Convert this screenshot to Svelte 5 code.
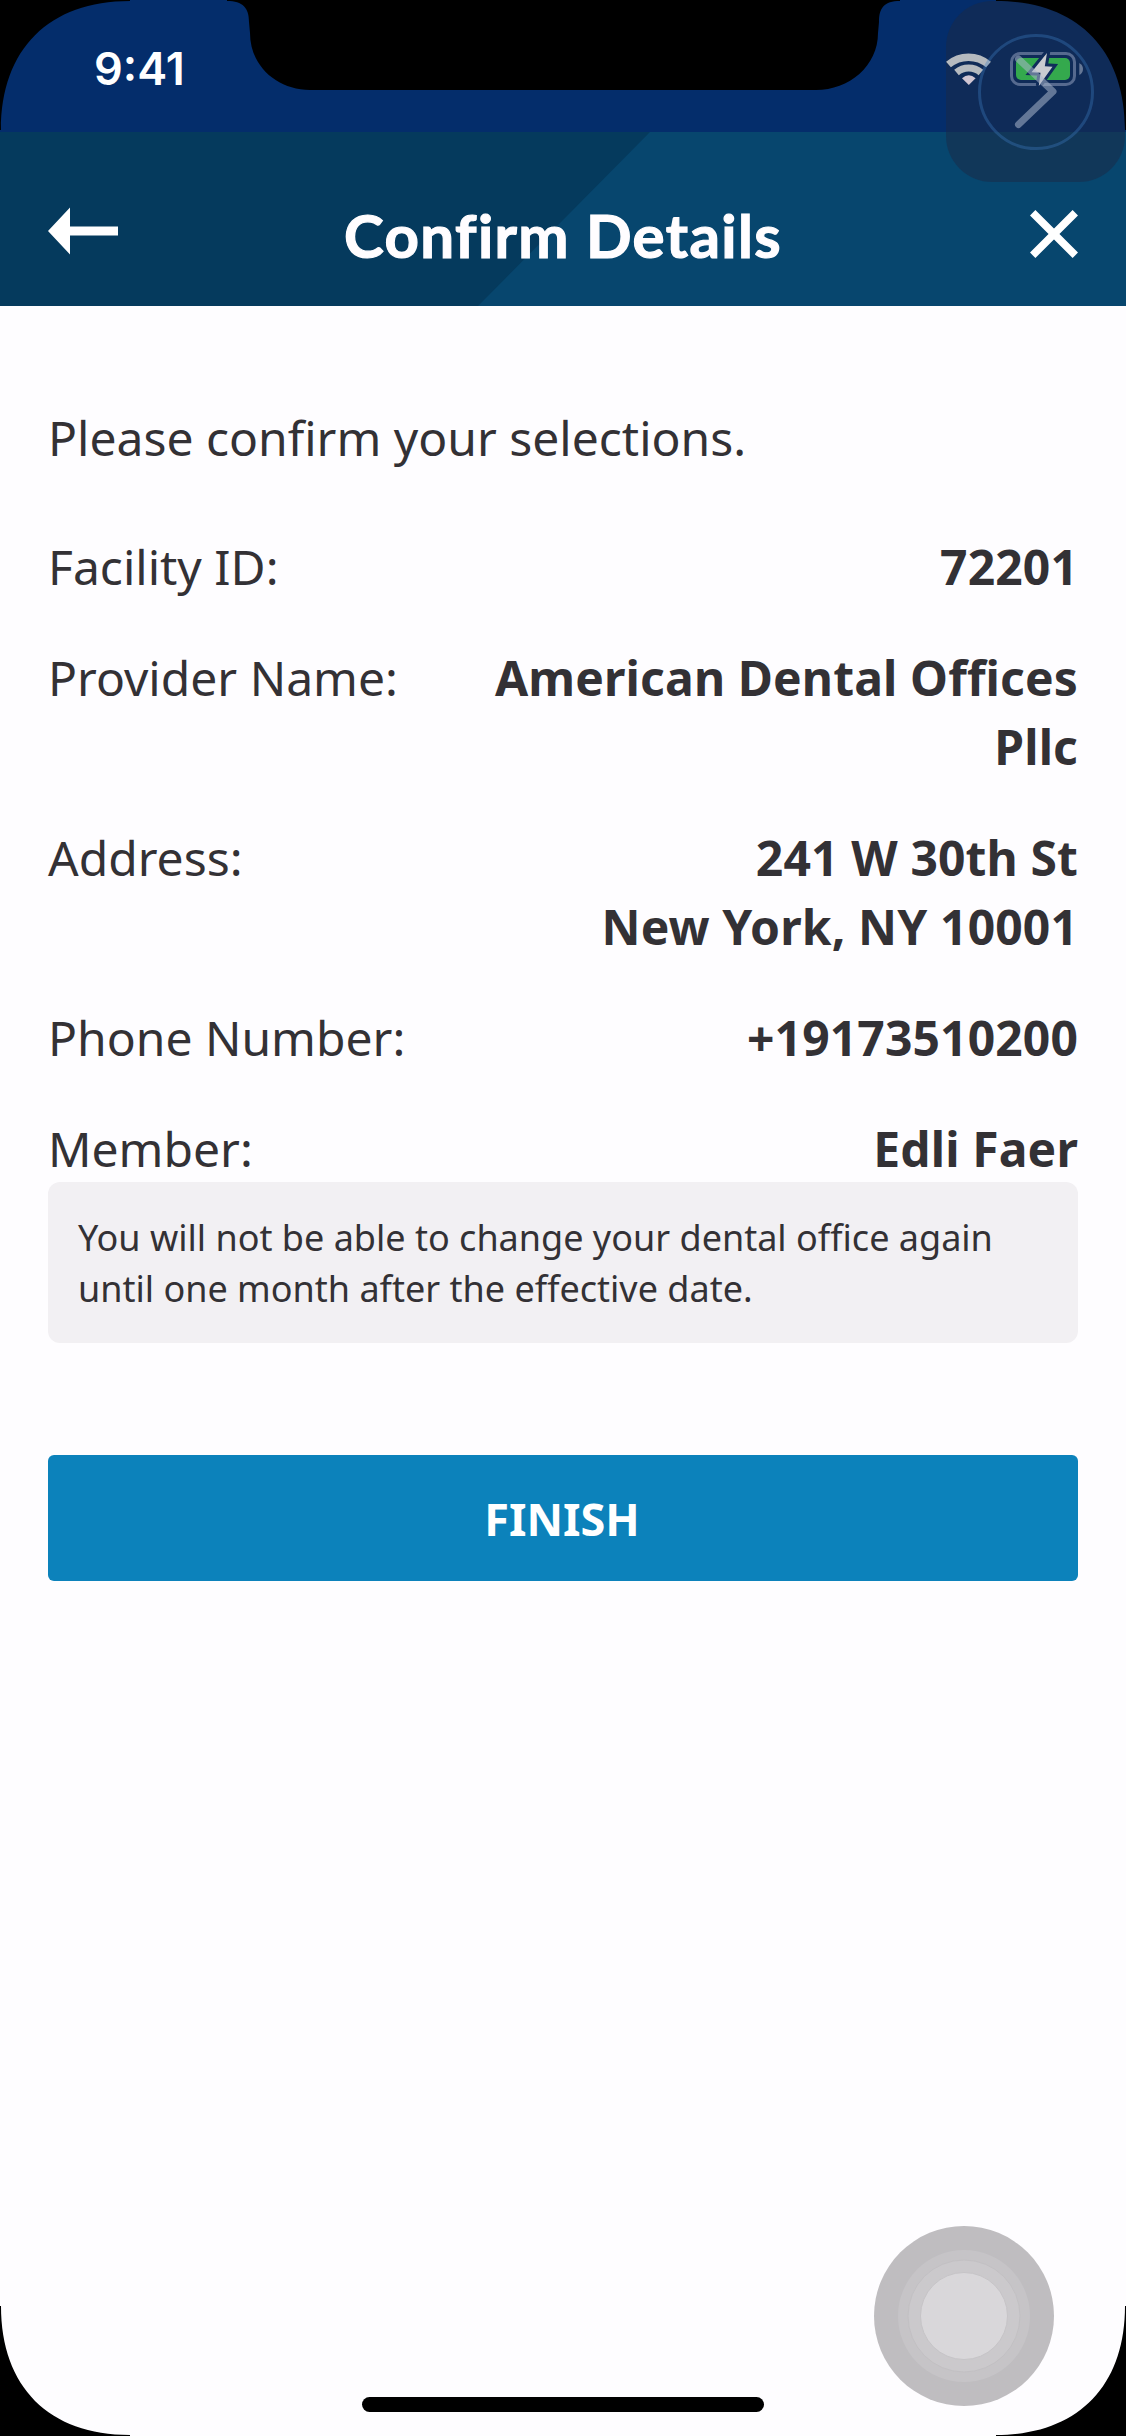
<script>
  const rows = [
    { label: 'Facility ID:', lines: ['72201'] },
    { label: 'Provider Name:', lines: ['American Dental Offices', 'Pllc'] },
    { label: 'Address:', lines: ['241 W 30th St', 'New York, NY 10001'] },
    { label: 'Phone Number:', lines: ['+19173510200'] },
    { label: 'Member:', lines: ['Edli Faer'] }
  ];
</script>

<div class="screen">
  <div class="status">
    <span class="time">9:41</span>
    <svg class="indicators" width="138" height="36" viewBox="946 51 138 36">
      <g fill="none" stroke="#b5babf">
        <path d="M948.5 64.5 A31 31 0 0 1 988.5 64.5" stroke-width="7.5" />
        <path d="M956.5 72.5 A18.5 18.5 0 0 1 980.9 72.5" stroke-width="7" />
      </g>
      <path d="M968.8 85 L962 78.2 Q968.8 72.3 975.6 78.2 Z" fill="#d0c6d2" />
      <rect x="1011.5" y="53.5" width="63" height="31" rx="8.5" fill="none" stroke="#566a8f" stroke-width="3" />
      <path d="M1079.3 63 Q1083 65 1083 69 T1079.3 75 Z" fill="#667896" />
      <rect x="1016" y="58" width="54" height="22" rx="5" fill="#34a94d" />
      <path d="M1047 53 L1031.5 72.3 L1040.5 72.7 L1038.8 86 L1052.5 66.7 L1044.8 66.3 Z" fill="#c9cbd0" stroke="#102c5a" stroke-width="6" paint-order="stroke" />
    </svg>
  </div>

  <header>
    <button class="icon" aria-label="Back">
      <svg width="70" height="48" viewBox="48 210 70 48">
        <path d="M48 231 L70 207.5 V226.5 H118 V235.5 H70 V254.5 Z" fill="#fff" />
      </svg>
    </button>
    <h1>Confirm Details</h1>
    <button class="icon" aria-label="Close">
      <svg width="48" height="48" viewBox="0 0 48 48">
        <path d="M2.7 2.7 L45.3 45.3 M45.3 2.7 L2.7 45.3" stroke="#fff" stroke-width="7.6" />
      </svg>
    </button>
  </header>

  <main>
    <p class="intro">Please confirm your selections.</p>
    <dl>
      {#each rows as row}
        <div class="row">
          <dt>{row.label}</dt>
          <dd>
            {#each row.lines as line}<span>{line}</span>{/each}
          </dd>
        </div>
      {/each}
    </dl>
    <p class="note">You will not be able to change your dental office again until one month after the effective date.</p>
    <button class="finish">FINISH</button>
  </main>

  <div class="home"></div>

  <div class="shade"></div>

  <!-- floating controls and the device outline lie over the page -->
  <svg class="overlay" width="1126" height="2436" viewBox="0 0 1126 2436">
    <circle cx="1036" cy="92" r="56.5" fill="none" stroke="#3f7fc4" stroke-opacity=".35" stroke-width="3" />
    <path d="M1018.5 59 L1053 91.5 L1018.5 124.5" fill="none" stroke="#a9b6cc" stroke-opacity=".55" stroke-width="7" stroke-linecap="round" stroke-linejoin="round" />
    <circle cx="964" cy="2316" r="90" fill="#bfbdc0" />
    <circle cx="964" cy="2316" r="66" fill="#c6c4c7" />
    <circle cx="964" cy="2316" r="56" fill="#cbc9cc" stroke="#c2c0c3" />
    <circle cx="964" cy="2316" r="43.5" fill="#d9d7da" stroke="#c6c4c7" />
    <g fill="#000">
      <path d="M0 0 H130 V1 C49 1 1 49 1 130 H0 Z" />
      <path d="M1126 0 H996 V1 C1077 1 1125 49 1125 130 H1126 Z" />
      <path d="M0 2436 H130 V2435 C49 2435 1 2387 1 2306 H0 Z" />
      <path d="M1126 2436 H996 V2435 C1077 2435 1125 2387 1125 2306 H1126 Z" />
      <path d="M227 0 H900 V1 C884 1 879 8 879 22 L878 33 C878 66 849 90 816 90 H310 C277 90 250 66 250 33 L249 22 C249 8 243 1 227 1 Z" />
    </g>
  </svg>
</div>

<style>
  :global(body) {
    margin: 0;
    background: #fefdff;
  }
  .screen {
    position: relative;
    display: flex;
    flex-direction: column;
    width: 1126px;
    height: 2436px;
    overflow: hidden;
    background: #fefdff;
    color: #333135;
    font-family: 'Noto Sans', sans-serif;
  }
  .status {
    display: flex;
    justify-content: space-between;
    align-items: center;
    box-sizing: border-box;
    height: 132px;
    padding: 6px 42px 0 94px;
    background: #042d6b;
  }
  .status .indicators {
    display: block;
    position: relative;
    z-index: 1;
  }
  .time {
    font: 600 45px/60px Inter, sans-serif;
    color: #fff;
  }
  header {
    display: flex;
    justify-content: space-between;
    align-items: center;
    box-sizing: border-box;
    height: 174px;
    padding: 30px 48px 0;
    background: #07466e;
    position: relative;
    isolation: isolate;
  }
  header::before {
    content: '';
    position: absolute;
    inset: 0;
    z-index: -1;
    background: #053a5d;
    clip-path: polygon(0 0, 650px 0, 478px 100%, 0 100%);
  }
  .icon {
    display: flex;
    width: 70px;
    padding: 0;
    border: 0;
    background: none;
  }
  .icon svg {
    overflow: visible;
  }
  .icon:last-child {
    justify-content: flex-end;
  }
  h1 {
    margin: 0;
    padding-top: 1px;
    font: 700 60px/72px Lato, sans-serif;
    letter-spacing: 1.4px;
    -webkit-text-stroke: 1.2px #fffdff;
    color: #fffdff;
    white-space: nowrap;
  }
  main {
    display: flex;
    flex-direction: column;
    padding: 97px 48px 0;
  }
  p,
  dl,
  dd {
    margin: 0;
  }
  .intro,
  .row {
    font-size: 48px;
    line-height: 69px;
  }
  dl {
    display: flex;
    flex-direction: column;
    gap: 42px;
    margin-top: 60px;
  }
  .row {
    display: flex;
    justify-content: space-between;
  }
  dd {
    display: flex;
    flex-direction: column;
    align-items: flex-end;
    font-weight: 700;
    letter-spacing: 0.13px;
  }
  .note {
    box-sizing: border-box;
    height: 161px;
    margin-top: -1px;
    padding: 30px;
    border-radius: 12px;
    background: #f2f0f3;
    font-size: 36px;
    line-height: 51px;
  }
  .finish {
    height: 126px;
    margin-top: 112px;
    padding: 2px 2px 0 0;
    border: 0;
    border-radius: 6px;
    background: #0c82bb;
    color: #fff;
    font: 700 45px/60px 'Noto Sans', sans-serif;
  }
  .home {
    width: 402px;
    height: 15px;
    margin: auto auto 24px;
    border-radius: 8px;
    background: #000;
  }
  .shade {
    position: absolute;
    top: 1px;
    right: 1px;
    width: 179px;
    height: 181px;
    border-radius: 46px;
    background: rgba(26, 43, 70, 0.52);
  }
  .overlay {
    position: absolute;
    inset: 0;
    z-index: 2;
    pointer-events: none;
  }
</style>
